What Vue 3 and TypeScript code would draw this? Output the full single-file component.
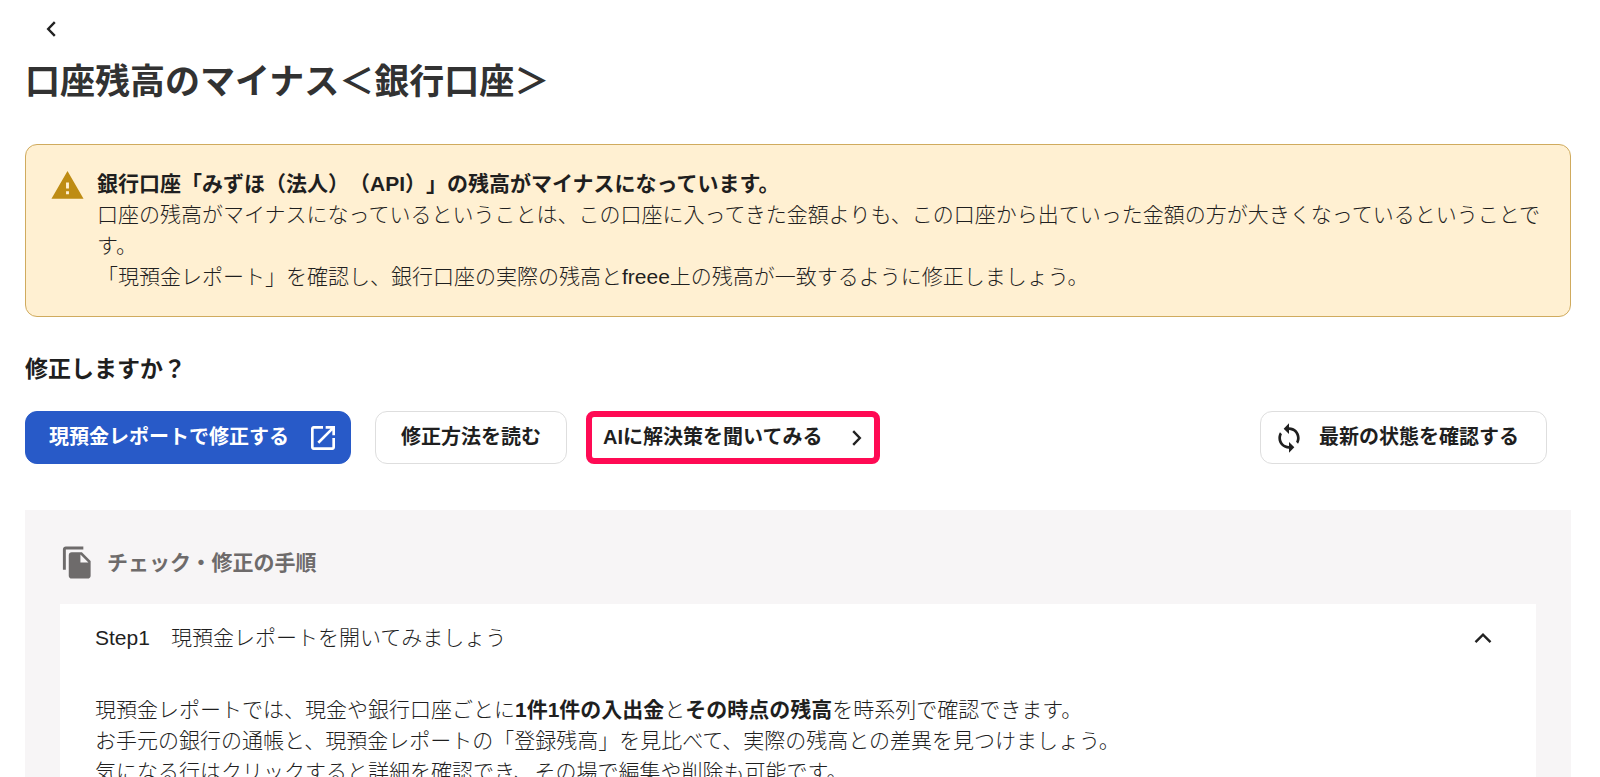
<script setup lang="ts">
import { ref } from 'vue'

const alertTitle = '銀行口座「みずほ（法人）（API）」の残高がマイナスになっています。'
const alertLines: string[] = [
  '口座の残高がマイナスになっているということは、この口座に入ってきた金額よりも、この口座から出ていった金額の方が大きくなっているということです。',
  '「現預金レポート」を確認し、銀行口座の実際の残高とfreee上の残高が一致するように修正しましょう。',
]
const stepOpen = ref(true)
</script>

<template>
  <main class="page">
    <button class="back" type="button" aria-label="戻る">
      <svg class="stroke" viewBox="0 0 10 16" width="10" height="16"><path d="M8.8 1.2 2.2 8l6.6 6.8" /></svg>
    </button>
    <h1>口座残高のマイナス＜銀行口座＞</h1>

    <section class="alert" role="alert">
      <svg class="warn" viewBox="0 0 24 24" width="35" height="35">
        <path d="M1 21h22L12 2 1 21zm12-3h-2v-2h2v2zm0-4h-2v-4h2v4z" />
      </svg>
      <div class="alert-body">
        <strong>{{ alertTitle }}</strong>
        <p v-for="line in alertLines" :key="line">{{ line }}</p>
      </div>
    </section>

    <h2>修正しますか？</h2>
    <div class="actions">
      <button class="btn primary" type="button">
        現預金レポートで修正する
        <svg viewBox="0 0 24 24" width="32" height="32">
          <path d="M19 19H5V5h7V3H5c-1.11 0-2 .9-2 2v14c0 1.1.89 2 2 2h14c1.1 0 2-.9 2-2v-7h-2v7zM14 3v2h3.59l-9.83 9.83 1.41 1.41L19 6.41V10h2V3h-7z" />
        </svg>
      </button>
      <button class="btn" type="button">修正方法を読む</button>
      <button class="btn ai" type="button">
        AIに解決策を聞いてみる
        <svg class="stroke" viewBox="0 0 10 16" width="10" height="16"><path d="M1.2 1.2 7.8 8l-6.6 6.8" /></svg>
      </button>
      <button class="btn refresh" type="button">
        <svg viewBox="0 0 24 24" width="32" height="32">
          <path d="M12 4V1L8 5l4 4V6c3.31 0 6 2.69 6 6 0 1.01-.25 1.97-.7 2.8l1.46 1.46C19.54 15.03 20 13.57 20 12c0-4.42-3.58-8-8-8zm0 14c-3.31 0-6-2.69-6-6 0-1.01.25-1.97.7-2.8L5.24 7.74C4.46 8.97 4 10.43 4 12c0 4.42 3.58 8 8 8v3l4-4-4-4v3z" />
        </svg>
        最新の状態を確認する
      </button>
    </div>

    <section class="panel">
      <h3>
        <svg viewBox="0 0 24 24" width="35" height="35">
          <path d="M16 1H4c-1.1 0-2 .9-2 2v14h2V3h12V1zm-1 4 6 6v10c0 1.1-.9 2-2 2H7.99C6.89 23 6 22.1 6 21l.01-14c0-1.1.89-2 1.99-2h7zm-1 7h5.5L14 6.5V12z" />
        </svg>
        チェック・修正の手順
      </h3>
      <div class="card">
        <button class="step" type="button" :aria-expanded="stepOpen" @click="stepOpen = !stepOpen">
          Step1　現預金レポートを開いてみましょう
          <svg class="stroke" :class="{ closed: !stepOpen }" viewBox="0 0 18 12" width="18" height="12">
            <path d="m1.5 10.2 7.5-7.6 7.5 7.6" />
          </svg>
        </button>
        <div v-if="stepOpen" class="step-body">
          <p>現預金レポートでは、現金や銀行口座ごとに<b>1件1件の入出金</b>と<b>その時点の残高</b>を時系列で確認できます。</p>
          <p>お手元の銀行の通帳と、現預金レポートの「登録残高」を見比べて、実際の残高との差異を見つけましょう。</p>
          <p>気になる行はクリックすると詳細を確認でき、その場で編集や削除も可能です。</p>
        </div>
      </div>
    </section>
  </main>
</template>

<style>
body {
  margin: 0;
  background: #fff;
}
</style>

<style scoped>
.page {
  box-sizing: border-box;
  height: 100vh;
  overflow: hidden;
  padding: 12px 29px 0 25px;
  color: #1f1f1f;
  font-family: "Liberation Sans", "Noto Sans CJK JP", sans-serif;
  font-size: 21px;
  font-weight: 300;
  line-height: 31px;
  text-spacing-trim: space-all;
}
h1, h2, h3, p {
  margin: 0;
}
strong, b {
  font-weight: 700;
}
svg {
  flex: none;
  fill: currentColor;
}
button {
  font: inherit;
  color: inherit;
  cursor: pointer;
}
.back {
  display: flex;
  align-items: center;
  height: 34px;
  padding: 0 21px;
  border: 0;
  background: none;
}
.stroke {
  fill: none;
  stroke: #222;
  stroke-width: 2.4;
}
h1 {
  margin-top: 10px;
  font-size: 35px;
  line-height: 52px;
  color: #323232;
}
.alert {
  display: flex;
  gap: 12px;
  margin-top: 36px;
  padding: 23px 16px 24px 24px;
  border: 1px solid #d0ab5e;
  border-radius: 12px;
  background: #fff0d2;
}
.warn {
  fill: #be8c14;
}
.alert-body strong {
  display: block;
}
h2 {
  margin-top: 36px;
  font-size: 23px;
  line-height: 32px;
}
.actions {
  display: flex;
  align-items: center;
  margin-top: 26px;
  padding-right: 24px;
}
.btn {
  display: flex;
  align-items: center;
  box-sizing: border-box;
  height: 53px;
  padding: 0 25px;
  border: 1px solid #dedede;
  border-radius: 12px;
  background: #fff;
  font-size: 20px;
  font-weight: 700;
  white-space: nowrap;
}
.primary {
  gap: 18px;
  margin-right: 24px;
  padding: 0 11px 0 23px;
  border-color: #285ac8;
  background: #285ac8;
  color: #fff;
}
.ai {
  gap: 30px;
  margin-left: 19px;
  padding: 0 12px 0 11px;
  border: 6px solid #ff0a54;
  border-radius: 8px;
}
.refresh {
  gap: 14px;
  margin-left: auto;
  padding: 0 27px 0 12px;
}
.panel {
  margin-top: 46px;
  padding: 35px 35px 48px;
  background: #f7f5f6;
}
h3 {
  display: flex;
  align-items: center;
  gap: 12px;
  font-size: 21px;
  color: #6e6b6b;
}
.card {
  margin-top: 24px;
  padding: 18px 35px 40px;
  background: #fff;
}
.step {
  display: flex;
  justify-content: space-between;
  align-items: center;
  width: 100%;
  padding: 0 9px 0 0;
  border: 0;
  background: none;
  text-align: left;
}
.closed {
  transform: rotate(180deg);
}
.step-body {
  margin-top: 41px;
}
</style>
